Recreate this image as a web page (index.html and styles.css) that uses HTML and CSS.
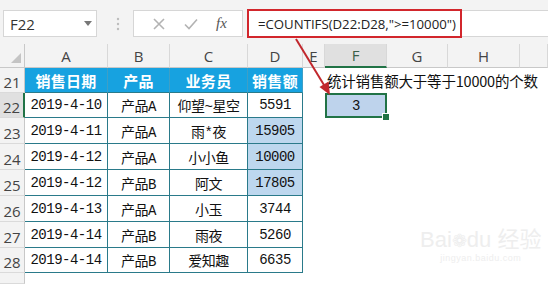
FILE: index.html
```html
<!DOCTYPE html>
<html lang="zh-CN">
<head>
  <meta charset="UTF-8">
  <title>COUNTIFS</title>
  <link rel="stylesheet" href="styles.css">
</head>
<body>
  <div class="toolbar">
    <div class="namebox">F22<span class="caret"></span></div>
    <div class="grip">
      <svg width="4" height="14" viewBox="0 0 4 14"><circle cx="2" cy="2" r="1.2" fill="#bdbdbd"/><circle cx="2" cy="7" r="1.2" fill="#bdbdbd"/><circle cx="2" cy="12" r="1.2" fill="#bdbdbd"/></svg>
    </div>
    <div class="fbtns">
      <svg width="12" height="12" viewBox="0 0 12 12"><path d="M1 1 L11 11 M11 1 L1 11" stroke="#b3b3b3" stroke-width="1.6" fill="none"/></svg>
      <svg width="14" height="12" viewBox="0 0 14 12"><path d="M1 6.5 L5 10.5 L13 1.5" stroke="#b3b3b3" stroke-width="1.6" fill="none"/></svg>
      <span class="fx">fx</span>
    </div>
    <div class="fbar">
      <div class="formula">=COUNTIFS(D22:D28,"&gt;=10000")</div>
    </div>
  </div>

  <div class="sheet">
    <div class="ch corner"><span class="tri"></span></div>
    <div class="ch">A</div>
    <div class="ch">B</div>
    <div class="ch">C</div>
    <div class="ch">D</div>
    <div class="ch">E</div>
    <div class="ch on">F</div>
    <div class="ch">G</div>
    <div class="ch">H</div>
    <div class="ch"></div>

    <div class="rh">21</div>
    <div class="c hd">销售日期</div>
    <div class="c hd">产品</div>
    <div class="c hd">业务员</div>
    <div class="c hd">销售额</div>
    <div class="note">统计销售额大于等于10000的个数</div>

    <div class="rh on">22</div>
    <div class="c">2019-4-10</div>
    <div class="c">产品A</div>
    <div class="c">仰望~星空</div>
    <div class="c">5591</div>
    <div class="c sel">3</div>

    <div class="rh">23</div>
    <div class="c">2019-4-11</div>
    <div class="c">产品A</div>
    <div class="c">雨*夜</div>
    <div class="c hl">15905</div>

    <div class="rh">24</div>
    <div class="c">2019-4-12</div>
    <div class="c">产品A</div>
    <div class="c">小小鱼</div>
    <div class="c hl">10000</div>

    <div class="rh">25</div>
    <div class="c">2019-4-12</div>
    <div class="c">产品B</div>
    <div class="c">阿文</div>
    <div class="c hl">17805</div>

    <div class="rh">26</div>
    <div class="c">2019-4-13</div>
    <div class="c">产品A</div>
    <div class="c">小玉</div>
    <div class="c">3744</div>

    <div class="rh">27</div>
    <div class="c">2019-4-14</div>
    <div class="c">产品B</div>
    <div class="c">雨夜</div>
    <div class="c">5260</div>

    <div class="rh">28</div>
    <div class="c">2019-4-14</div>
    <div class="c">产品B</div>
    <div class="c">爱知趣</div>
    <div class="c">6635</div>

    <div class="rh"></div>
  </div>

  <svg class="arrow" width="548" height="284" viewBox="0 0 548 284">
    <path d="M296 39 L324 85" stroke="#c1272d" stroke-width="2" fill="none"/>
    <path d="M330 95 L328.5 81.5 L319.5 87 Z" fill="#c1272d"/>
  </svg>

  <div class="mark">
    <div class="mark-big">Bai<span class="paw">&#x2741;</span>du 经验</div>
    <div class="mark-small">jingyan.baidu.com</div>
  </div>
</body>
</html>
```

FILE: styles.css
```css
*{
  margin: 0;
  padding: 0;
  box-sizing: border-box;
}
body{
  width: 548px;
  height: 284px;
  overflow: hidden;
  position: relative;
  background: #fff;
  font-family: "Open Sans", "Noto Sans CJK SC", sans-serif;
  color: #222;
}
.toolbar{
  height: 44px;
  background: #f3f3f3;
  display: flex;
  align-items: center;
  padding-top: 3px;
}
.namebox{
  margin-left: 3px;
  width: 94px;
  height: 27px;
  background: #fff;
  border: 1px solid #d6d6d6;
  display: flex;
  align-items: center;
  justify-content: space-between;
  padding: 0 4px 0 6px;
  font-size: 15px;
  color: #333;
}
.caret{
  width: 0;
  height: 0;
  border-left: 4px solid transparent;
  border-right: 4px solid transparent;
  border-top: 5px solid #777;
}
.grip{
  width: 36px;
  display: flex;
  justify-content: center;
  padding-left: 6px;
}
.fbtns{
  width: 110px;
  height: 27px;
  background: #fff;
  border: 1px solid #d6d6d6;
  display: flex;
  align-items: center;
  justify-content: space-around;
  padding: 0 6px 0 10px;
}
.fx{
  font-family: "Liberation Serif", serif;
  font-style: italic;
  font-size: 15px;
  color: #555;
}
.fbar{
  flex: 1;
  margin-left: 4px;
  height: 27px;
  background: #fff;
  border-top: 1px solid #d6d6d6;
  border-bottom: 1px solid #d6d6d6;
}
.formula{
  width: 215px;
  height: 29px;
  margin-top: -2px;
  border: 2px solid #d2262c;
  display: flex;
  align-items: center;
  padding-left: 9px;
  font-size: 13.2px;
  color: #222;
  white-space: nowrap;
}
.sheet{
  display: grid;
  grid-template-columns: 25px 83px 62px 78px 55px 22px 62px 61px 72px 1fr;
  grid-template-rows: 24px 25px 25px 26px 26px 26px 26px 26px 25px 11px;
}
.ch{
  background: #f3f3f3;
  border-right: 1px solid #d8d8d8;
  border-bottom: 1px solid #c8c8c8;
  display: flex;
  align-items: center;
  justify-content: center;
  font-size: 15px;
  color: #444;
}
.ch.on{
  background: #e0e0e0;
  border-bottom: 2px solid #217346;
  color: #3a5f48;
}
.corner{
  align-items: flex-end;
  justify-content: flex-end;
  padding: 0 3px 4px 0;
  border-right-color: #c8c8c8;
}
.tri{
  width: 0;
  height: 0;
  border-left: 10px solid transparent;
  border-bottom: 10px solid #c4c4c4;
}
.rh{
  grid-column: 1;
  background: #f3f3f3;
  border-right: 1px solid #c8c8c8;
  border-bottom: 1px solid #dadada;
  display: flex;
  align-items: flex-end;
  justify-content: center;
  font-size: 15px;
  line-height: 20px;
  color: #444;
}
.rh.on{
  background: #e0e0e0;
  border-right: 2px solid #217346;
}
.c{
  border-right: 1px solid #2a7a8a;
  border-bottom: 1px solid #2a7a8a;
  display: flex;
  align-items: center;
  justify-content: center;
  font-family: "Liberation Mono", "Noto Sans CJK SC", monospace;
  font-size: 14px;
  letter-spacing: -0.5px;
  color: #111;
  white-space: nowrap;
}
.hd{
  background: #17a2e0;
  color: #fff;
  font-family: "Noto Sans CJK SC", sans-serif;
  font-weight: bold;
  font-size: 15px;
  letter-spacing: 0.3px;
  border-right-color: #3f9fc6;
  border-bottom-color: #2a7a8a;
}
.hl{
  background: #bdd7ee;
}
.note{
  grid-column: 7 / 11;
  display: flex;
  align-items: center;
  padding-left: 2px;
  font-family: "Noto Sans CJK SC", sans-serif;
  font-size: 14.5px;
  letter-spacing: -0.2px;
  color: #111;
  white-space: nowrap;
  overflow: hidden;
}
.sel{
  grid-column: 7;
  position: relative;
  background: #bed3ec;
  border: 2px solid #217346;
}
.sel::after{
  content: "";
  position: absolute;
  right: -5px;
  bottom: -5px;
  width: 6px;
  height: 6px;
  background: #217346;
  border: 1px solid #fff;
}
.arrow{
  position: absolute;
  left: 0;
  top: 0;
  pointer-events: none;
}
.mark{
  position: absolute;
  left: 420px;
  top: 228px;
  color: #eeeeee;
  font-family: "Liberation Sans", "Noto Sans CJK SC", sans-serif;
  text-align: center;
}
.mark-big{
  font-size: 22px;
  line-height: 24px;
}
.paw{
  font-size: 18px;
}
.mark-small{
  font-size: 9px;
  letter-spacing: 0.5px;
}
```
